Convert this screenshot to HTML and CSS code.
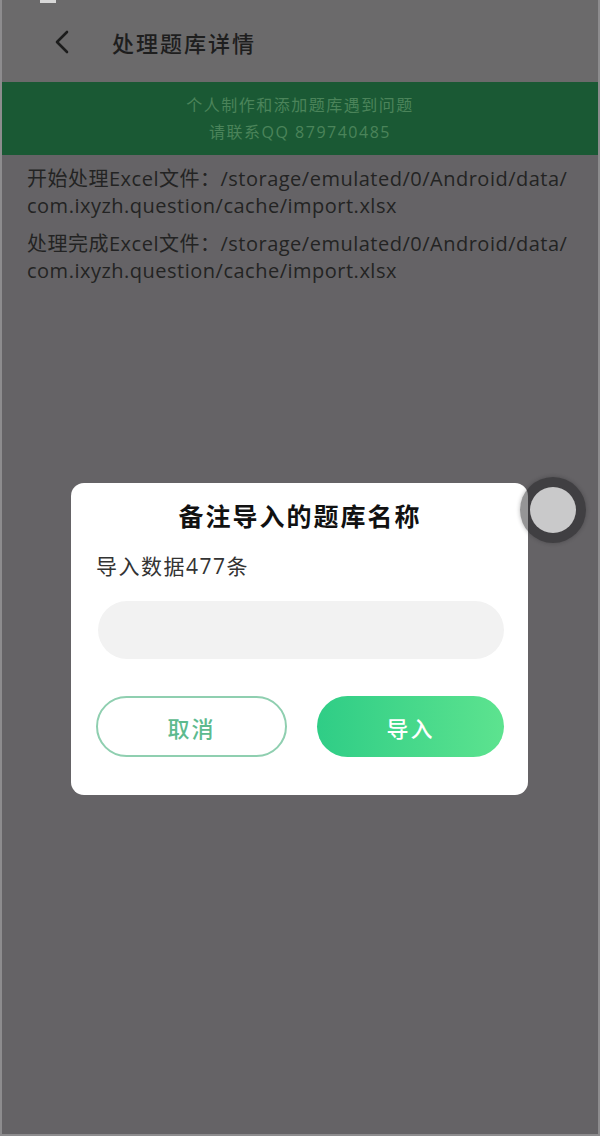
FILE: index.html
```html
<!DOCTYPE html>
<html lang="zh">
<head>
<meta charset="utf-8">
<title>处理题库详情</title>
<link rel="stylesheet" href="styles.css">
</head>
<body>
<div class="screen">
  <div class="status"><span class="status-glyph"></span></div>
  <header class="appbar">
    <svg class="back" viewBox="0 0 16 24" width="16" height="24" aria-hidden="true">
      <path d="M13 2 L3 12 L13 22" fill="none" stroke="#1c1c1c" stroke-width="2.6" stroke-linecap="round" stroke-linejoin="round"/>
    </svg>
    <h1 class="title">处理题库详情</h1>
  </header>
  <div class="notice">
    <p>个人制作和添加题库遇到问题</p>
    <p>请联系QQ 879740485</p>
  </div>
  <div class="log">
    <p>开始处理Excel文件：/storage/emulated/0/Android/data/<wbr>com.ixyzh.question/cache/import.xlsx</p>
    <p>处理完成Excel文件：/storage/emulated/0/Android/data/<wbr>com.ixyzh.question/cache/import.xlsx</p>
  </div>

  <div class="dialog">
    <h2 class="dialog-title">备注导入的题库名称</h2>
    <p class="dialog-info">导入数据477条</p>
    <div class="dialog-input"></div>
    <div class="dialog-actions">
      <button class="btn btn-cancel">取消</button>
      <button class="btn btn-ok">导入</button>
    </div>
  </div>

  <div class="float-ball"><span></span></div>
</div>
</body>
</html>
```

FILE: styles.css
```css
* { box-sizing: border-box; }
html, body { margin: 0; padding: 0; }
body {
  font-family: "Open Sans", "Noto Sans CJK SC", sans-serif;
  background: #656366;
}
.screen {
  position: relative;
  width: 600px;
  height: 1136px;
  background: #656366;
  border-left: 2px solid #8d8c8e;
  border-right: 2px solid #8d8c8e;
  border-bottom: 2px solid #8d8c8e;
  overflow: hidden;
}
.status {
  height: 10px;
  background: #6b6a6b;
  padding-left: 38px;
}
.status-glyph {
  display: block;
  width: 16px;
  height: 3px;
  background: #d8d8d8;
}
.appbar {
  height: 72px;
  background: #6b6a6b;
  display: flex;
  align-items: center;
  padding-left: 52px;
  padding-bottom: 8px;
}
.back { margin-right: 42px; }
.title {
  margin: 0;
  font-family: "Noto Sans CJK SC", sans-serif;
  font-size: 22px;
  font-weight: 500;
  color: #1e1e1e;
  letter-spacing: 2px;
}
.notice {
  height: 73px;
  background: #1a5934;
  display: flex;
  flex-direction: column;
  align-items: center;
  justify-content: center;
  gap: 3px;
}
.notice p {
  margin: 0;
  font-size: 16px;
  line-height: 24px;
  color: #4b845a;
  letter-spacing: 1.5px;
}
.log {
  padding: 10px 8px 0 25px;
}
.log p {
  margin: 0 0 11px;
  font-size: 20px;
  line-height: 27px;
  color: #232323;
  letter-spacing: 0.5px;
}

.dialog {
  position: absolute;
  left: 69px;
  top: 483px;
  width: 457px;
  height: 312px;
  background: #fff;
  border-radius: 13px;
  padding: 15px 24px 0 25px;
  display: flex;
  flex-direction: column;
}
.dialog-title {
  margin: 0;
  text-align: center;
  font-family: "Noto Sans CJK SC", sans-serif;
  font-size: 25px;
  line-height: 34px;
  font-weight: 700;
  color: #111;
  letter-spacing: 2px;
}
.dialog-info {
  margin: 20px 0 0;
  font-size: 21px;
  line-height: 28px;
  color: #333;
  letter-spacing: 1.5px;
}
.dialog-input {
  margin: 21px 0 0 2px;
  height: 58px;
  border-radius: 29px;
  background: #f2f2f2;
}
.dialog-actions {
  margin-top: 37px;
  display: flex;
  gap: 30px;
}
.btn {
  flex: 1;
  height: 61px;
  border-radius: 31px;
  font-family: "Noto Sans CJK SC", sans-serif;
  font-size: 22px;
  font-weight: 500;
  letter-spacing: 2px;
  cursor: pointer;
}
.btn-cancel {
  background: #fff;
  border: 2px solid #8fcfb0;
  color: #5dba8e;
}
.btn-ok {
  border: none;
  background: linear-gradient(90deg, #2fcd86, #5de38f);
  color: #fff;
}

.float-ball {
  position: absolute;
  left: 518px;
  top: 477px;
  width: 66px;
  height: 66px;
  border-radius: 50%;
  background: rgba(20, 20, 22, 0.45);
  box-shadow: 0 0 4px rgba(20,20,22,0.3);
  display: flex;
  align-items: center;
  justify-content: center;
}
.float-ball span {
  width: 46px;
  height: 46px;
  border-radius: 50%;
  background: #c9c9ca;
}
```
